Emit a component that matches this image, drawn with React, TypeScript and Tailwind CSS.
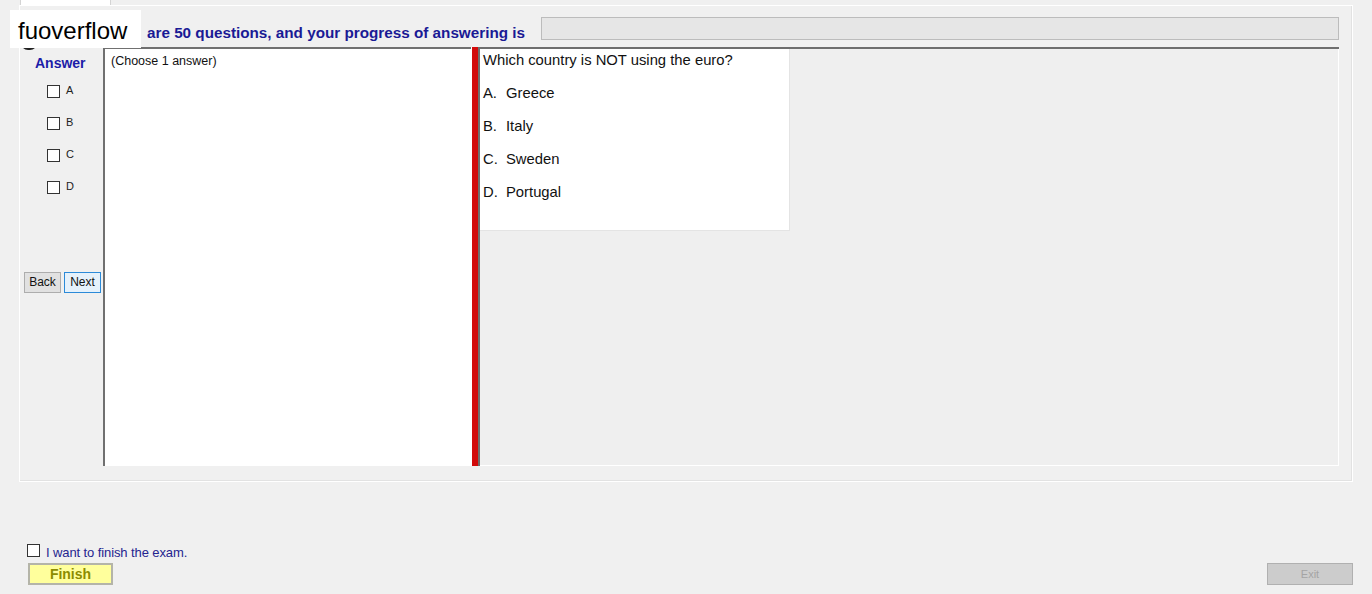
import React from "react";

const Check = () => (
  <span className="inline-block w-[13px] h-[13px] border border-[#333333] bg-white shrink-0" />
);

export default function App() {
  const options = [
    ["A.", "Greece"],
    ["B.", "Italy"],
    ["C.", "Sweden"],
    ["D.", "Portugal"],
  ];
  return (
    <div
      className="relative w-[1372px] h-[594px] bg-[#f0f0f0] overflow-hidden flex flex-col"
      style={{ fontFamily: '"Liberation Sans", Arial, sans-serif' }}
    >
      {/* tab strip */}
      <div className="h-[5px] flex">
        <div className="ml-[20px] w-[91px] h-[5px] bg-white border-x border-[#d4d4d4]" />
      </div>

      {/* tab page */}
      <div className="ml-[19px] w-[1334px] h-[477px] border border-white shadow-[inset_-1px_-1px_0_#e2e2e2] flex flex-col">
        {/* header row */}
        <div className="mt-[11px] h-[23px] flex items-center">
          <span className="ml-[127px] text-[15.25px] font-bold text-[#1a1a95] leading-[16px] mt-[8px] whitespace-nowrap">
            are 50 questions, and your progress of answering is
          </span>
          <div className="ml-auto mr-[13px] w-[798px] h-[23px] bg-[#e6e6e6] border border-[#bcbcbc]" />
        </div>

        {/* main area */}
        <div className="mt-[7px] ml-[4px] w-[1315px] h-[419px] flex">
          {/* left column */}
          <div className="w-[79px] flex flex-col">
            <div className="pt-[8px] pl-[11px] text-[14px] leading-[16px] font-bold text-[#1c1ca8]">
              Answer
            </div>
            <div className="mt-[4px] flex flex-col">
              {["A", "B", "C", "D"].map((l) => (
                <div key={l} className="h-[32px] flex items-center pl-[23px] gap-[6px]">
                  <Check />
                  <span className="text-[11px] text-[#222] leading-[12px] -mt-[2px]">{l}</span>
                </div>
              ))}
            </div>
            <div className="mt-[69px] flex gap-[3px]">
              <button className="w-[37px] h-[21px] bg-[#e1e1e1] border border-[#adadad] text-[12px] text-[#111] leading-[19px] p-0">
                Back
              </button>
              <button className="w-[37px] h-[21px] bg-[#e5f1fb] border border-[#2b8ad8] text-[12px] text-[#111] leading-[19px] p-0">
                Next
              </button>
            </div>
          </div>

          {/* middle text box */}
          <div className="w-[368px] h-full bg-white border-l-2 border-t-2 border-[#707070] pl-[6px] pt-[5px]">
            <div className="text-[12.5px] leading-[14px] text-[#111]">(Choose 1 answer)</div>
          </div>

          {/* splitter */}
          <div className="w-[7px] h-full border-l border-white bg-[#d20a0a]" />

          {/* right panel */}
          <div className="flex-1 h-full bg-[#efefef] border-l-2 border-t-2 border-[#6e6e6e] shadow-[inset_-1px_-1px_0_#ffffff]">
            <div className="w-[310px] h-[182px] bg-white border-r border-b border-[#e4e4e4] pl-[3px] pt-[3px] flex flex-col gap-[17px]">
              <div className="text-[14.8px] leading-[16px] text-[#111] whitespace-nowrap">Which country is NOT using the euro?</div>
              {options.map(([k, v]) => (
                <div key={k} className="text-[14.8px] leading-[16px] text-[#111] flex">
                  <span className="w-[23px]">{k}</span>
                  <span>{v}</span>
                </div>
              ))}
            </div>
          </div>
        </div>
      </div>

      {/* bottom */}
      <div className="mt-[62px] ml-[27px] h-[13px] flex items-center gap-[6px]">
        <Check />
        <span className="relative top-[2px] text-[13px] leading-[14px] text-[#25258f] whitespace-nowrap tracking-[-0.1px]">
          I want to finish the exam.
        </span>
      </div>
      <div className="mt-[6px] flex justify-between pl-[28px] pr-[19px]">
        <button className="w-[85px] h-[22px] bg-[#ffff9c] border-2 border-[#b4b4a8] text-[14px] font-bold text-[#8c8c00] leading-[18px] p-0">
          Finish
        </button>
        <button className="w-[86px] h-[22px] bg-[#cccccc] border border-[#b0b0b0] text-[11px] text-[#a4a4a4] leading-[20px] p-0">
          Exit
        </button>
      </div>

      {/* overlays */}
      <div className="absolute left-[21px] top-[36px] w-[16px] h-[14px] rounded-full border-2 border-[#222]" />
      <div className="absolute left-[10px] top-[10px] w-[131px] h-[38px] bg-white flex items-center pl-[8px] pt-[4px]">
        <span className="text-[24px] leading-[28px] text-black whitespace-nowrap">
          fuoverflow
        </span>
      </div>
    </div>
  );
}
